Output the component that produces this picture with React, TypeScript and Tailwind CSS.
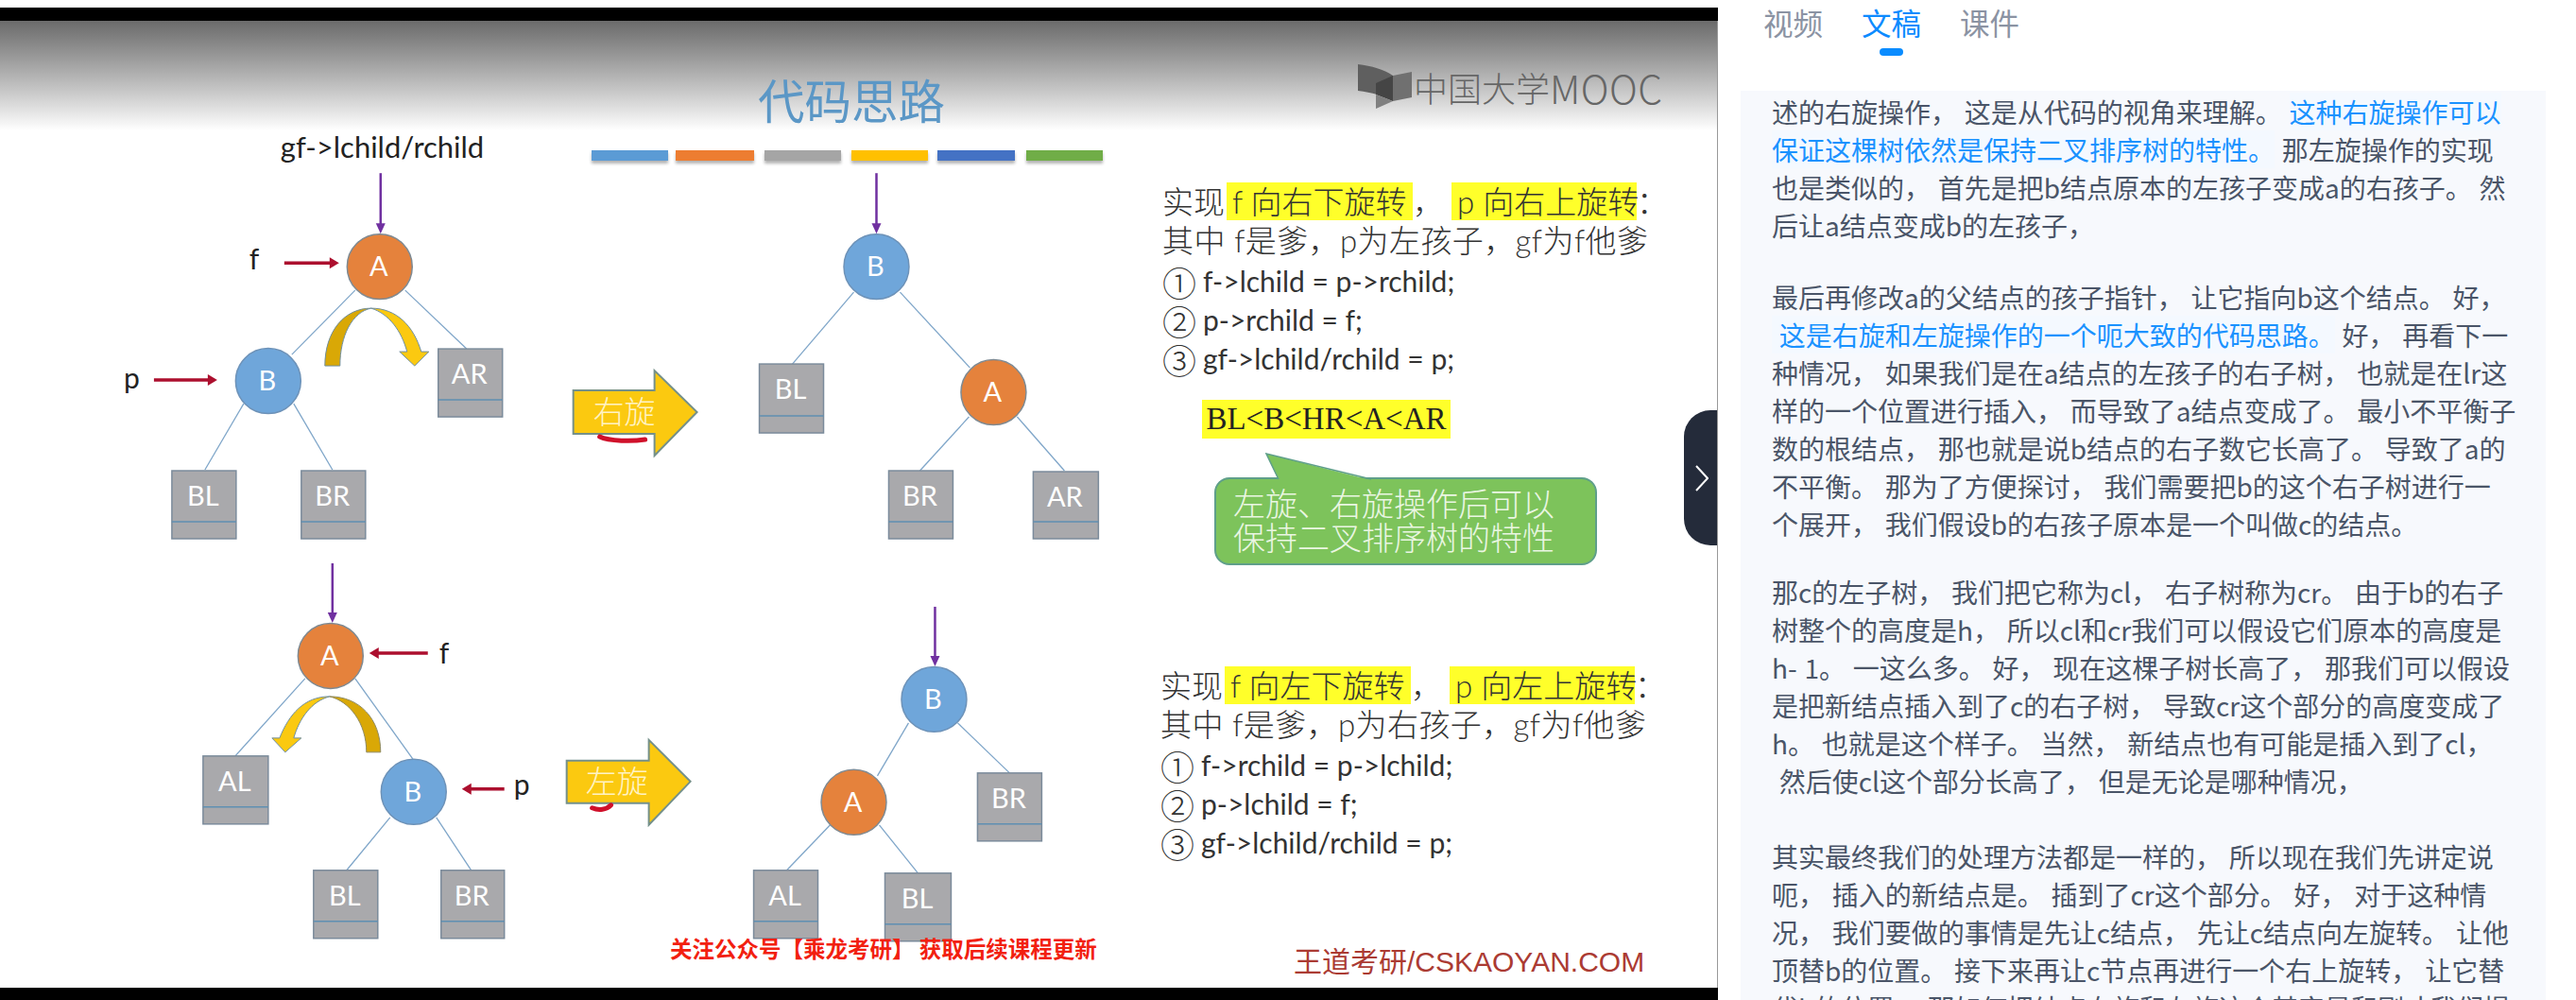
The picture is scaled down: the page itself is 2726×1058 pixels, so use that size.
const cjk = "font-['Noto_Sans_CJK_SC',sans-serif]";

type Seg = string | { blue: string };

const transcript: Seg[][][] = [
  [
    ["述的右旋操作， 这是从代码的视角来理解。 ", { blue: "这种右旋操作可以" }],
    [{ blue: "保证这棵树依然是保持二叉排序树的特性。" }, " 那左旋操作的实现"],
    ["也是类似的， 首先是把b结点原本的左孩子变成a的右孩子。 然"],
    ["后让a结点变成b的左孩子，"],
  ],
  [
    ["最后再修改a的父结点的孩子指针， 让它指向b这个结点。 好，"],
    [{ blue: " 这是右旋和左旋操作的一个呃大致的代码思路。" }, " 好， 再看下一"],
    ["种情况， 如果我们是在a结点的左孩子的右子树， 也就是在lr这"],
    ["样的一个位置进行插入， 而导致了a结点变成了。 最小不平衡子"],
    ["数的根结点， 那也就是说b结点的右子数它长高了。 导致了a的"],
    ["不平衡。 那为了方便探讨， 我们需要把b的这个右子树进行一"],
    ["个展开， 我们假设b的右孩子原本是一个叫做c的结点。"],
  ],
  [
    ["那c的左子树， 我们把它称为cl， 右子树称为cr。 由于b的右子"],
    ["树整个的高度是h， 所以cl和cr我们可以假设它们原本的高度是"],
    ["h- 1。 一这么多。 好， 现在这棵子树长高了， 那我们可以假设"],
    ["是把新结点插入到了c的右子树， 导致cr这个部分的高度变成了"],
    ["h。 也就是这个样子。 当然， 新结点也有可能是插入到了cl，"],
    [" 然后使cl这个部分长高了， 但是无论是哪种情况，"],
  ],
  [
    ["其实最终我们的处理方法都是一样的， 所以现在我们先讲定说"],
    ["呃， 插入的新结点是。 插到了cr这个部分。 好， 对于这种情"],
    ["况， 我们要做的事情是先让c结点， 先让c结点向左旋转。 让他"],
    ["顶替b的位置。 接下来再让c节点再进行一个右上旋转， 让它替"],
    ["代b的位置。 那如何把结点右旋和左旋这个其实是和刚才我们提"],
  ],
];

const paraGaps = ["", "mt-[36px]", "mt-[32px]", "mt-[40px]"];

const Circle = ({ cx, cy, label }: { cx: number; cy: number; label: "A" | "B" }) => (
  <g>
    <circle
      cx={cx}
      cy={cy}
      r={34.5}
      fill={label === "A" ? "#e5823c" : "#6fa6da"}
      stroke={label === "A" ? "#7f8a92" : "#6d92b8"}
      strokeWidth={1.5}
    />
    <text x={cx - 1} y={cy + 10} textAnchor="middle" className="fill-white font-['Lato'] text-[29px]">
      {label}
    </text>
  </g>
);

const Box = ({ x, y, w = 68, h = 72, label }: { x: number; y: number; w?: number; h?: number; label: string }) => (
  <g>
    <rect x={x} y={y} width={w} height={h} fill="#a9a9ac" stroke="#7b8b9b" strokeWidth={1.5} />
    <line x1={x} x2={x + w} y1={y + h - 18} y2={y + h - 18} stroke="#5f8fb2" strokeWidth={1.5} />
    <text x={x + w / 2 - 1} y={y + 37} textAnchor="middle" className="fill-white font-['Lato'] text-[29px]">
      {label}
    </text>
  </g>
);

const Edges = ({ lines }: { lines: number[][] }) => (
  <g stroke="#7fa6c9" strokeWidth={1.3}>
    {lines.map(([x1, y1, x2, y2]) => (
      <line key={`${x1}-${y1}-${x2}`} x1={x1} y1={y1} x2={x2} y2={y2} />
    ))}
  </g>
);

const Down = ({ x, y1, y2 }: { x: number; y1: number; y2: number }) => (
  <g>
    <line x1={x} x2={x} y1={y1} y2={y2 - 8} stroke="#7030a0" strokeWidth={2.5} />
    <polygon points={`${x - 5},${y2 - 11} ${x + 5},${y2 - 11} ${x},${y2}`} fill="#7030a0" />
  </g>
);

const RedArrow = ({ x1, x2, y }: { x1: number; x2: number; y: number }) => {
  const dir = x2 > x1 ? 1 : -1;
  return (
    <g>
      <line x1={x1} x2={x2 - dir * 8} y1={y} y2={y} stroke="#ac0f2e" strokeWidth={3.5} />
      <polygon points={`${x2 - dir * 10},${y - 6} ${x2 - dir * 10},${y + 6} ${x2},${y}`} fill="#ac0f2e" />
    </g>
  );
};

const BigArrow = ({ x, top, bottom, head, tip, cy, up, down, label, labelX }: {
  x: number; top: number; bottom: number; head: number; tip: number; cy: number; up: number; down: number; label: string; labelX: number;
}) => (
  <g>
    <polygon
      points={`${x},${top} ${head},${top} ${head},${up} ${tip},${cy} ${head},${down} ${head},${bottom} ${x},${bottom}`}
      fill="#fbc910"
      stroke="#74908a"
      strokeWidth={2}
    />
    <text x={labelX} y={cy + 12} className="fill-[#fff3c4] font-['Noto_Sans_CJK_SC'] text-[33px] font-light">
      {label}
    </text>
  </g>
);

const Diagram = () => (
  <svg viewBox="0 22 1818 1023" className="absolute inset-0 h-full w-full">
    {/* top left: before right rotation */}
    <text x={297} y={167} className="fill-[#222] font-['Lato'] text-[31px]">gf-&gt;lchild/rchild</text>
    <Edges lines={[[376, 307, 309, 375], [429, 307, 494, 369], [258, 427, 217, 497], [311, 427, 352, 497]]} />
    <Down x={403} y1={183} y2={247} />
    <Circle cx={402} cy={282} label="A" />
    <Circle cx={284} cy={403} label="B" />
    <text x={264} y={285} className="fill-[#222] font-['Lato'] text-[30px]">f</text>
    <RedArrow x1={301} x2={359} y={278} />
    <text x={131} y={411} className="fill-[#222] font-['Lato'] text-[30px]">p</text>
    <RedArrow x1={163} x2={230} y={402} />
    <Box x={464} y={369} label="AR" />
    <Box x={182} y={498} label="BL" />
    <Box x={319} y={498} label="BR" />
    <path d="M344 387 C344 350 365 326 393 326 C373 330 360 355 360 387 Z" fill="#d9a806" stroke="#6f8fa0" />
    <path d="M393 326 C420 326 438 345 446 372 L454 372 L439 387 L423 372 L431 372 C425 350 412 332 393 326 Z" fill="#fbc910" stroke="#6f8fa0" />

    <BigArrow x={607} top={413} bottom={459} head={693} tip={738} cy={436} up={392} down={482} label="右旋" labelX={628} />
    <path d="M635 462 C645 467 670 467 683 465" fill="none" stroke="#d0102a" strokeWidth={5} strokeLinecap="round" />

    {/* top right: after right rotation */}
    <Edges lines={[[904, 309, 839, 385], [953, 309, 1027, 389], [1077, 441, 1127, 498], [1026, 441, 974, 498]]} />
    <Down x={928} y1={183} y2={247} />
    <Circle cx={928} cy={282} label="B" />
    <Circle cx={1052} cy={415} label="A" />
    <Box x={804} y={385} h={73} label="BL" />
    <Box x={941} y={498} label="BR" />
    <Box x={1094} y={499} w={69} h={71} label="AR" />

    {/* bottom left: before left rotation */}
    <Edges lines={[[323, 718, 249, 800], [376, 718, 437, 803], [413, 865, 367, 921], [462, 865, 499, 921]]} />
    <Down x={352} y1={596} y2={659} />
    <Circle cx={350} cy={694} label="A" />
    <Circle cx={438} cy={838} label="B" />
    <RedArrow x1={453} x2={391} y={691} />
    <text x={465} y={702} className="fill-[#222] font-['Lato'] text-[30px]">f</text>
    <RedArrow x1={534} x2={489} y={835} />
    <text x={544} y={841} className="fill-[#222] font-['Lato'] text-[30px]">p</text>
    <Box x={215} y={800} w={69} label="AL" />
    <Box x={332} y={921} label="BL" />
    <Box x={467} y={921} w={67} label="BR" />
    <path d="M403 796 C403 760 380 737 349 737 C370 742 388 765 388 796 Z" fill="#d9a806" stroke="#8f8a60" />
    <path d="M349 737 C322 737 306 756 296 781 L288 781 L302 796 L319 781 L311 781 C317 760 330 742 349 737 Z" fill="#fbc910" stroke="#6f8fa0" />

    <BigArrow x={600} top={805} bottom={850} head={687} tip={731} cy={827} up={783} down={873} label="左旋" labelX={620} />
    <path d="M627 855 C634 858 642 857 647 852" fill="none" stroke="#d0102a" strokeWidth={5} strokeLinecap="round" />

    {/* bottom right: after left rotation */}
    <Edges lines={[[962, 765, 929, 821], [879, 873, 833, 921], [931, 873, 972, 924], [1014, 765, 1069, 818]]} />
    <Down x={990} y1={642} y2={705} />
    <Circle cx={989} cy={740} label="B" />
    <Circle cx={904} cy={849} label="A" />
    <Box x={798} y={921} label="AL" />
    <Box x={937} y={924} w={70} label="BL" />
    <Box x={1035} y={818} label="BR" />
  </svg>
);

const Logo = () => (
  <div className="absolute left-[1437px] top-[46px] flex items-center">
    <svg viewBox="1437 68 58 48" className="h-[48px] w-[58px]">
      <path d="M1437 68 C1452 70 1464 73 1474 80 L1474 107 C1464 101 1452 98 1437 96 Z" fill="#5f5f5f" />
      <polygon points="1474,80 1494,76 1494,103 1474,107" fill="#707070" />
      <polygon points="1456,88 1474,80 1474,107 1456,100" fill="#454545" />
      <polygon points="1456,100 1474,107 1456,115" fill="#808080" />
    </svg>
    <span className={`ml-[1px] flex items-center text-[36px] font-light leading-none text-[#666] ${cjk}`}>
      中国大学<span className="text-[41px] tracking-[0.5px]">MOOC</span>
    </span>
  </div>
);

const Highlight = ({ children, className }: { children: React.ReactNode; className: string }) => (
  <span className={`flex h-[40px] items-center bg-[#ffff2a] pl-[6px] ${className}`}>{children}</span>
);

const CodeLine = ({ mark, code }: { mark: string; code: string }) => (
  <div className="flex h-[41px] items-center whitespace-pre">
    <span className={`w-[43px] text-[36px] font-light leading-none ${cjk}`}>{mark}</span>
    <span className="text-[30px]">{code}</span>
  </div>
);

const Explain = ({ line1a, line1b, line2, codes, className }: {
  line1a: string; line1b: string; line2: string; codes: string[]; className: string;
}) => (
  <div className={`absolute flex flex-col text-[#333] font-['Lato','Noto_Sans_CJK_SC',sans-serif] ${className}`}>
    <div className="flex h-[40px] items-center whitespace-pre text-[33px] font-light leading-none">
      <span className="mr-[2px]">实现</span>
      <Highlight className="w-[197px]">{line1a}</Highlight>
      <span className="w-[41px]">，</span>
      <Highlight className="w-[196px]">{line1b}</Highlight>
      <span>：</span>
    </div>
    <div className="mb-[3px] mt-[1px] flex h-[40px] items-center whitespace-pre text-[33px] font-light leading-none tracking-[0.4px]">{line2}</div>
    {codes.map((code, i) => (
      <CodeLine key={code} mark={["①", "②", "③"][i]} code={code} />
    ))}
  </div>
);

const Slide = () => (
  <div className="relative flex-1 overflow-hidden border-r border-[#999] bg-white">
    {/* header fade */}
    <div className="absolute inset-x-0 top-0 h-[116px] bg-gradient-to-b from-[#6b6b6b] to-white" />
    <div className={`absolute left-[802px] top-[53px] text-[49.5px] leading-[60px] text-[#5b97c6] ${cjk}`}>代码思路</div>
    <Logo />

    <div className="absolute left-[626px] top-[137px] flex">
      <div className="h-[11px] w-[81px] bg-[#5b9bd5] shadow-[0_3px_3px_rgba(0,0,0,0.3)]" />
      <div className="ml-[8px] h-[11px] w-[83px] bg-[#ed7d31] shadow-[0_3px_3px_rgba(0,0,0,0.3)]" />
      <div className="ml-[11px] h-[11px] w-[81px] bg-[#a5a5a5] shadow-[0_3px_3px_rgba(0,0,0,0.3)]" />
      <div className="ml-[11px] h-[11px] w-[81px] bg-[#ffc000] shadow-[0_3px_3px_rgba(0,0,0,0.3)]" />
      <div className="ml-[10px] h-[11px] w-[82px] bg-[#4472c4] shadow-[0_3px_3px_rgba(0,0,0,0.3)]" />
      <div className="ml-[12px] h-[11px] w-[81px] bg-[#70ad47] shadow-[0_3px_3px_rgba(0,0,0,0.3)]" />
    </div>

    <Diagram />

    <Explain
      className="left-[1230px] top-[171px]"
      line1a="f 向右下旋转"
      line1b="p 向右上旋转"
      line2="其中 f是爹，p为左孩子，gf为f他爹"
      codes={["f->lchild = p->rchild;", "p->rchild = f;", "gf->lchild/rchild = p;"]}
    />

    <div className="absolute left-[1272px] top-[401px] flex h-[41px] w-[263px] items-center justify-center bg-[#ffff2a] font-['Liberation_Serif',serif] text-[33px] leading-none text-[#222]">
      {"BL<B<HR<A<AR"}
    </div>

    {/* green callout */}
    <div className="absolute left-[1285px] top-[483px] h-[93px] w-[405px] rounded-[16px] border-2 border-[#5f9f8a] bg-[#7dc35b] py-[7px] pl-[18px]">
      <svg viewBox="0 0 114 30" className="absolute -top-[28px] left-[52px] h-[30px] w-[114px]">
        <polygon points="14,29 1,1 112,29" fill="#7dc35b" />
        <polyline points="14,28 1,1 112,28" fill="none" stroke="#5f9f8a" strokeWidth={1.5} />
      </svg>
      <div className={`whitespace-nowrap text-[34px] font-light leading-[36px] text-[#eaf6e2] ${cjk}`}>
        左旋、右旋操作后可以
        <br />
        保持二叉排序树的特性
      </div>
    </div>

    <Explain
      className="left-[1228px] top-[683px]"
      line1a="f 向左下旋转"
      line1b="p 向左上旋转"
      line2="其中 f是爹，p为右孩子，gf为f他爹"
      codes={["f->rchild = p->lchild;", "p->lchild = f;", "gf->lchild/rchild = p;"]}
    />

    <div className={`absolute left-[709px] top-[966px] whitespace-pre text-[23.5px] font-bold leading-[30px] text-[#f2200f] ${cjk}`}>
      关注公众号【乘龙考研】 获取后续课程更新
    </div>
    <div className="absolute left-[1369px] top-[974px] whitespace-pre font-['Liberation_Sans','Noto_Sans_CJK_SC',sans-serif] text-[30px] leading-[44px] text-[#ab3b33]">
      王道考研/CSKAOYAN.COM
    </div>

    {/* collapse handle */}
    <div className="absolute right-0 top-[412px] flex h-[143px] w-[35px] items-center justify-end rounded-l-[28px] bg-[#242b3a] pr-[9px]">
      <svg viewBox="0 0 14 28" className="h-[28px] w-[14px]" fill="none" stroke="white" strokeWidth={2}>
        <polyline points="1,1 13,14 1,27" />
      </svg>
    </div>
  </div>
);

const SidePanel = () => (
  <div className={`flex h-full flex-1 flex-col overflow-hidden ${cjk}`}>
    <div className="relative flex h-[96px] shrink-0 gap-[42px] pl-[48px] pt-[4px] text-[31.5px] leading-[38px] text-[#8b93a3]">
      <span>视频</span>
      <span className="relative -ml-[1px] text-[#0d8bff]">
        文稿
        <span className="absolute left-[19px] top-[47px] h-[8px] w-[25px] rounded-full bg-[#0a8cff]" />
      </span>
      <span className="-ml-[1px]">课件</span>
    </div>
    <div className="ml-[24px] flex w-[852px] flex-1 flex-col overflow-hidden bg-[#f7f9fd] pl-[33px] pt-[2px] text-[28px] leading-[40px] text-[#4a5568] [word-spacing:1.5px]">
      {transcript.map((para, i) => (
        <div key={i} className={paraGaps[i]}>
          {para.map((line, j) => (
            <div key={j} className="whitespace-pre">
              {line.map((seg, k) =>
                typeof seg === "string" ? (
                  <span key={k}>{seg}</span>
                ) : (
                  <span key={k} className="bg-[#f4f9ff] text-[#1a92ff]">{seg.blue}</span>
                )
              )}
            </div>
          ))}
        </div>
      ))}
    </div>
  </div>
);

export default function App() {
  return (
    <div className="flex h-[1058px] w-[2726px] overflow-hidden bg-white">
      <div className="flex h-full w-[1818px] shrink-0 flex-col pt-[8px]">
        <div className="h-[14px] bg-black" />
        <Slide />
        <div className="h-[13px] bg-black" />
      </div>
      <SidePanel />
    </div>
  );
}
